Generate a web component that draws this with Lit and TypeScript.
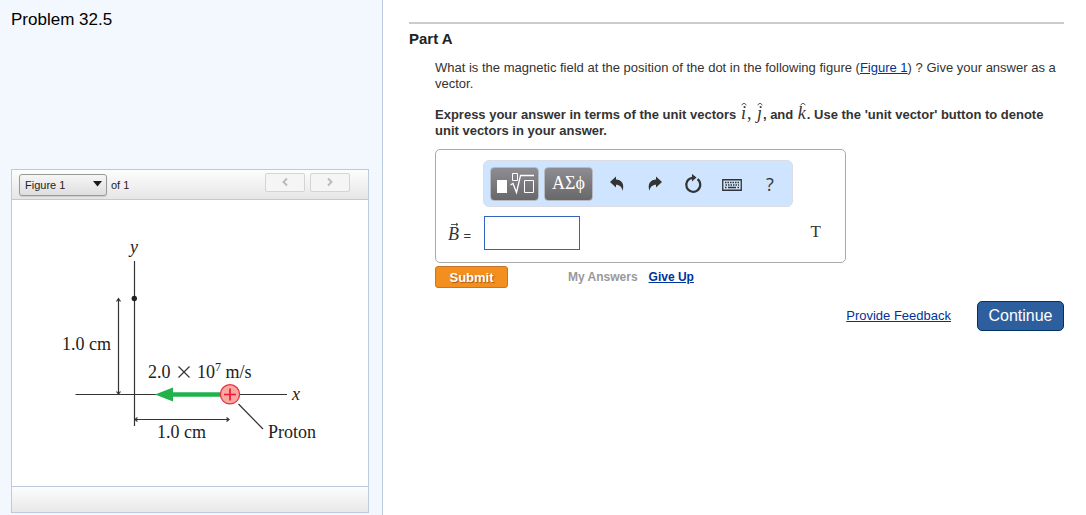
import { LitElement, html, css, svg } from "lit";
import { customElement, property } from "lit/decorators.js";

/** A math symbol with a hat or an arrow drawn above it. */
@customElement("math-accent")
export class MathAccent extends LitElement {
  @property() symbol = "";
  @property() accent = "hat";

  static styles = css`
    :host {
      display: inline-block;
      position: relative;
      padding: 0 1px;
      font: italic 18px/12px "Liberation Serif", serif;
      color: #333;
    }
    .mark {
      position: absolute;
      left: 50%;
      top: -5px;
      margin-left: -3px;
      overflow: visible;
      fill: none;
      stroke: #555;
    }
  `;

  render() {
    return html`<span>${this.symbol}</span><svg class="mark" width="8" height="5" viewBox="0 0 8 5" aria-hidden="true">
      ${this.accent === "hat"
        ? svg`<path d="M1.500 3L4 1.200L6.500 3" />`
        : svg`<path d="M0 1.500H7M5 0L7 1.500L5 3" />`}
    </svg>`;
  }
}

/** Side panel with the figure selector and the drawing. */
@customElement("figure-panel")
export class FigurePanel extends LitElement {
  static styles = css`
    :host {
      display: block;
      border: 1px solid #b9cbdd;
      background: #fff;
      color: #222;
      font: 11px/14px "Liberation Sans", Arial, sans-serif;
    }
    .bar {
      display: flex;
      align-items: center;
      box-sizing: border-box;
      height: 30px;
      padding: 0 18px 0 7px;
      border-bottom: 1px solid #b9cbdd;
      background: linear-gradient(#fdfdfd, #e6e6e6);
    }
    .picker {
      display: grid;
      align-items: center;
      margin-right: 4px;
    }
    select,
    .caret {
      grid-area: 1 / 1;
    }
    select {
      appearance: none;
      width: 88px;
      height: 22px;
      margin: 0;
      padding: 0 20px 0 5px;
      border: 1px solid #999;
      border-radius: 3px;
      background: linear-gradient(#f6f6f6, #dedede);
      box-shadow: 0 1px 1px #ccc;
      color: #222;
      font: inherit;
    }
    .caret {
      justify-self: end;
      margin: 0 5px 2px 0;
      pointer-events: none;
    }
    .pager {
      display: flex;
      gap: 5px;
      margin: 0 0 5px auto;
    }
    .pager button {
      display: grid;
      place-items: center;
      width: 40px;
      height: 19px;
      padding: 0;
      border: 1px solid #d4d4d4;
      border-radius: 2px;
      background: #f5f5f5;
    }
    .drawing {
      display: block;
      width: 100%;
      height: 286px;
    }
    .line {
      fill: none;
      stroke: #333;
      stroke-width: 1.2;
    }
    .label {
      fill: #222;
      font: 18px "Liberation Serif", serif;
    }
    .var {
      font-style: italic;
    }
    .power {
      font-size: 12px;
    }
    .foot {
      height: 25px;
      border-top: 1px solid #b9cbdd;
      background: linear-gradient(#fdfdfd, #e8e8e8);
    }
  `;

  render() {
    return html`
      <div class="bar">
        <div class="picker">
          <select id="figure" aria-label="Figure"><option>Figure 1</option></select>
          <svg class="caret" width="9" height="6" viewBox="0 0 9 6" aria-hidden="true"><path d="M0 0H9L4.500 5.500Z" fill="#1a1a1a" /></svg>
        </div>
        <label for="figure">of 1</label>
        <div class="pager">
          <button type="button" aria-label="Previous figure">
            <svg width="8" height="10" viewBox="0 0 8 10"><path d="M6 1.500L2.500 5L6 8.500" fill="none" stroke="#bbb" stroke-width="2" /></svg>
          </button>
          <button type="button" aria-label="Next figure">
            <svg width="8" height="10" viewBox="0 0 8 10"><path d="M2 1.500L5.500 5L2 8.500" fill="none" stroke="#bbb" stroke-width="2" /></svg>
          </button>
        </div>
      </div>
      <svg class="drawing" viewBox="12 200 356 286" preserveAspectRatio="xMinYMin meet" role="img" aria-label="Proton moving along the x axis">
        <path class="line" d="M134.500 261V426M75.500 394.500H287" />
        <path class="line" d="M118.500 299V394M116.500 301.500L118.500 298.500L120.500 301.500M116.500 391.500L118.500 394L120.500 391.500" />
        <path class="line" d="M135 419.500H229M137.500 417.500L135 419.500L137.500 421.500M226.500 417.500L229 419.500L226.500 421.500" />
        <path class="line" d="M238.500 404L263 429" />
        <circle cx="134.300" cy="298.500" r="2.700" fill="#222" />
        <path d="M222 394.500H170" stroke="#22b24c" stroke-width="4.500" />
        <path d="M155 394.500L173 387.500V401.500Z" fill="#22b24c" />
        <circle cx="230" cy="394.300" r="9.600" fill="#f9a99a" stroke="#e0314f" stroke-width="1.300" />
        <path d="M224 394.500H236M230 388.500V400.500" stroke="#ee1744" stroke-width="1.700" />
        <text class="label var" x="130" y="253">y</text>
        <text class="label var" x="292" y="400">x</text>
        <text class="label" x="62" y="350">1.0 cm</text>
        <text class="label" x="157" y="438">1.0 cm</text>
        <text class="label" x="268" y="438">Proton</text>
        <text class="label" x="148" y="378">2.0</text>
        <path d="M178.500 366.500L189.500 377.500M189.500 366.500L178.500 377.500" class="line" />
        <text class="label" x="197" y="378">10<tspan class="power" dy="-7">7</tspan><tspan dy="7"> m/s</tspan></text>
      </svg>
      <div class="foot"></div>
    `;
  }
}

/** Equation entry box: toolbar, answer field and units. */
@customElement("answer-box")
export class AnswerBox extends LitElement {
  static styles = css`
    :host {
      display: block;
      box-sizing: border-box;
      max-width: 411px;
      padding: 10px 24px 12px 11px;
      border: 1px solid #aaa;
      border-radius: 5px;
    }
    .tools {
      display: flex;
      align-items: center;
      box-sizing: border-box;
      height: 47px;
      margin: 0 28px 9px 36px;
      padding: 0 3px 0 6px;
      border: 1px solid #dadde3;
      border-radius: 6px;
      background: #cfe5ff;
    }
    button {
      display: grid;
      place-items: center;
      padding: 0;
      border: 0;
      background: none;
      color: #333;
    }
    .dark {
      flex: none;
      width: 49px;
      height: 34px;
      margin-right: 5px;
      border: 1px solid #b5bac3;
      border-radius: 4px;
      background: linear-gradient(#8d8d92, #68686b);
      color: #fff;
      font: 18px "Liberation Serif", serif;
    }
    .icons {
      display: flex;
      flex: 1;
      justify-content: space-around;
    }
    .icons button {
      width: 38px;
      height: 34px;
      font: 18px/20px "Open Sans", sans-serif;
    }
    .entry {
      display: flex;
      align-items: center;
      color: #333;
      font: 13px "Liberation Sans", Arial, sans-serif;
    }
    label {
      width: 37px;
      padding-top: 4px;
    }
    input {
      box-sizing: border-box;
      width: 96px;
      height: 34px;
      padding: 4px;
      border: 1px solid #3366bb;
      font: 18px "Liberation Serif", serif;
    }
    .unit {
      margin: 0 0 2px auto;
      font: 17px "Liberation Serif", serif;
    }
  `;

  render() {
    return html`
      <div class="tools">
        <button type="button" class="dark" aria-label="Templates">
          <svg width="39" height="24" viewBox="0 0 39 24" fill="none" stroke="#fff">
            <path d="M2 8H12V21H2Z" fill="#fff" stroke="none" />
            <path d="M17.500 1.500H22.500V8.500H17.500Z" />
            <path d="M15.500 13L18 11.500L21.500 20.500L25.500 3.500H39" stroke-width="1.300" />
            <path d="M29.500 8.500H38.500V20.500H29.500Z" />
          </svg>
        </button>
        <button type="button" class="dark">ΑΣϕ</button>
        <div class="icons">
          <button type="button" aria-label="Undo">
            <svg width="16" height="18" viewBox="0 0 16 18"><path d="M1 7L7 1.500V4.500C12 4.500 16 8.500 13.500 16C13 12 10.500 9.800 7 9.800V12.500Z" fill="#333" /></svg>
          </button>
          <button type="button" aria-label="Redo">
            <svg width="16" height="18" viewBox="0 0 16 18"><path d="M15 7L9 1.500V4.500C4 4.500 0 8.500 2.500 16C3 12 5.500 9.800 9 9.800V12.500Z" fill="#333" /></svg>
          </button>
          <button type="button" aria-label="Reset">
            <svg width="18" height="20" viewBox="0 0 18 20"><path d="M13.500 5.200A7 7 0 1 1 8.500 3.800" fill="none" stroke="#333" stroke-width="2.200" /><path d="M8 0L12.500 3.500L8 7.500Z" fill="#333" /></svg>
          </button>
          <button type="button" aria-label="Keyboard shortcuts">
            <svg width="20" height="14" viewBox="0 -2 20 14"><path d="M.75 .75H19.250V11.250H.75Z" fill="none" stroke="#333" stroke-width="1.300" /><path d="M3 3.500H17M3.500 5.900H17" stroke="#333" stroke-width="1.500" stroke-dasharray="1.500 1" /><path d="M3 8.500H4.500M6 8.500H14M15.500 8.500H17" stroke="#333" stroke-width="1.400" /></svg>
          </button>
          <button type="button" aria-label="Help">?</button>
        </div>
      </div>
      <div class="entry">
        <label for="answer"><math-accent symbol="B" accent="arrow"></math-accent> =</label>
        <input id="answer" type="text" autocomplete="off" />
        <span class="unit">T</span>
      </div>
    `;
  }
}

@customElement("app-root")
export class AppRoot extends LitElement {
  static styles = css`
    :host {
      display: grid;
      grid-template-columns: minmax(300px, 383px) 1fr;
      min-height: 100vh;
      background: #fff;
      color: #333;
      font: 13px/16px "Liberation Sans", Arial, sans-serif;
    }
    aside {
      display: flex;
      flex-direction: column;
      justify-content: space-between;
      box-sizing: border-box;
      padding: 11px 13px 2px 11px;
      border-right: 1px solid #b9cbdd;
      background: #f3f8ff;
    }
    h1 {
      margin: 0;
      color: #000;
      font-size: 17px;
      font-weight: 400;
      line-height: 18px;
    }
    main {
      padding: 22px 22px 0 26px;
    }
    h2 {
      margin: 0 0 13px;
      padding-top: 6px;
      border-top: 2px solid #ccc;
      color: #222;
      font-size: 15px;
      line-height: 17px;
    }
    .body {
      margin-left: 26px;
    }
    p {
      margin: 0 0 15px;
    }
    .hint {
      margin-bottom: 10px;
      font-weight: 700;
    }
    .math {
      font: 18px/12px "Liberation Serif", serif;
    }
    a {
      color: #003399;
    }
    .actions {
      display: flex;
      align-items: center;
      margin-top: 3px;
      font-size: 12px;
      line-height: 18px;
      font-weight: 700;
    }
    .submit {
      width: 73px;
      height: 22px;
      margin-right: 60px;
      padding: 0;
      border: 1px solid #c8742c;
      border-radius: 3px;
      background: #f28f1f;
      color: #fff;
      font: 700 13px "Liberation Sans", Arial, sans-serif;
      text-shadow: 1px 1px 1px #a85a10;
    }
    .mine {
      margin-right: 11px;
      color: #999;
    }
    .next {
      display: flex;
      align-items: center;
      justify-content: flex-end;
      gap: 26px;
      margin-top: 13px;
    }
    .continue {
      width: 87px;
      height: 30px;
      padding: 0;
      border: 1px solid #003366;
      border-radius: 5px;
      background: #2d5e9e;
      color: #fff;
      font: 16px "Liberation Sans", Arial, sans-serif;
    }
  `;

  render() {
    return html`
      <aside>
        <h1>Problem 32.5</h1>
        <figure-panel></figure-panel>
      </aside>
      <main>
        <h2>Part A</h2>
        <div class="body">
          <p>
            What is the magnetic field at the position of the dot in the following figure (<a href="#figure">Figure 1</a>) ? Give your answer as a vector.
          </p>
          <p class="hint">
            Express your answer in terms of the unit vectors
            <math-accent symbol="i"></math-accent><span class="math">, </span>
            <math-accent symbol="j"></math-accent>, and <math-accent symbol="k"></math-accent>. Use the 'unit vector' button to denote unit vectors in your answer.
          </p>
          <answer-box></answer-box>
          <div class="actions">
            <button type="button" class="submit">Submit</button>
            <span class="mine">My Answers</span>
            <a href="#giveup">Give Up</a>
          </div>
        </div>
        <div class="next">
          <a href="#feedback">Provide Feedback</a>
          <button type="button" class="continue">Continue</button>
        </div>
      </main>
    `;
  }
}
